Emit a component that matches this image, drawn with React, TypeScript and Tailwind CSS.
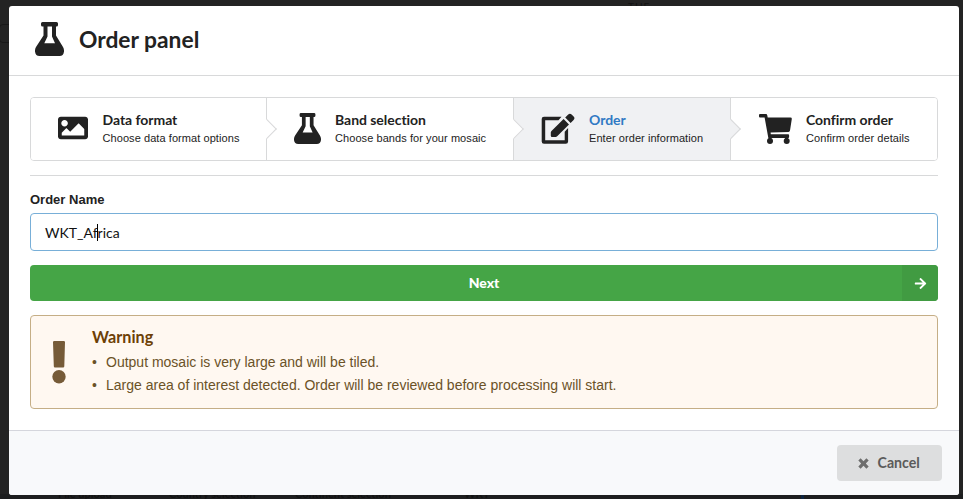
import type { ReactNode } from "react";
import { FaImage, FaArrowRight } from "react-icons/fa";

const sans = "font-['Liberation_Sans',Arial,sans-serif]";
const lato = "font-[Lato,sans-serif]";

function Flask({ className }: { className: string }) {
  return (
    <svg className={className} viewBox="0 0 29 34" preserveAspectRatio="none" fill="#222" fillRule="evenodd">
      <path d="M7.500 0h14q1.500 0 1.500 1.500v1.500q0 1.500-1.500 1.500H21V13.500l7 11.500q1.200 2.200 1 4.500-.5 4.500-4.500 4.500h-20Q.500 34 0 29.500-.200 27.200 1 25L8.500 13.500V4.500H7.500Q6 4.500 6 3V1.500Q6 0 7.500 0zM12.500 4.500V14.500L9.300 21.300H20L17 14.500V4.500z" />
    </svg>
  );
}

function Edit({ className }: { className: string }) {
  return (
    <svg className={className} viewBox="0 0 34 31" fill="#222">
      <path d="M20.500 3.800H3Q.700 3.800.700 6v22.500q0 2.200 2.300 2.200h21.800q2.300 0 2.300-2.200V15l-3.400 3.800v8.500H4.200V7.200h13.300z" />
      <path d="M22.600 6.100 28 11.500 16.200 23.300q-.7.700-1.600.7H11q-1.200 0-1.200-1.200v-3.300q0-.9.700-1.600z" />
      <path d="M24.200 4.500 27.200 1.500q1.700-1.700 3.400 0l2 2q1.700 1.700 0 3.400L29.600 9.900z" />
    </svg>
  );
}

function Cart({ className }: { className: string }) {
  return (
    <svg className={className} viewBox="0 0 33 30" fill="#222">
      <path d="M1 0h6q1 0 1.200 1l.5 2.500h22.800q1.500 0 1.300 1.500l-1.800 11.500q-.2 1.300-1.500 1.400l-17.900.6.200 1.800h17.300q1 0 1 1v1.700q0 1-1 1H10.500q-1.200 0-1.400-1.200L5.600 3.500H1q-1 0-1-1V1q0-1 1-1z" />
      <path d="M9.500 22.500h3v3h-3zM26 22.500h3v3h-3z" />
      <circle cx="11" cy="27" r="3" />
      <circle cx="27.700" cy="27" r="3" />
    </svg>
  );
}

type StepProps = {
  box: string;
  icon: ReactNode;
  title: string;
  titleClass?: string;
  text: string;
  active?: boolean;
  last?: boolean;
};

function Step({ box, icon, title, titleClass = "text-[#222]", text, active, last }: StepProps) {
  return (
    <div className={`relative flex items-center ${box} ${active ? "bg-[#f0f1f3]" : "bg-white"} ${last ? "" : "border-r border-[#d8d9da]"}`}>
      {icon}
      <div className="flex flex-col whitespace-nowrap">
        <span className={`${lato} text-[14px] leading-[18px] font-bold tracking-[-0.04px] ${titleClass}`}>{title}</span>
        <span className={`${sans} text-[11px] leading-[18px] tracking-[0.07px] text-[#222]`}>{text}</span>
      </div>
      {!last && (
        <span className={`absolute top-[24px] -right-[8px] z-10 size-[14px] rotate-45 border-t border-r border-[#d8d9da] ${active ? "bg-[#f0f1f3]" : "bg-white"}`} />
      )}
    </div>
  );
}

function Backdrop() {
  return (
    <div className={`absolute inset-0 overflow-hidden bg-[#232323] text-[#121212] ${lato}`}>
      <span className="absolute top-0 left-[628px] text-[10px] leading-[12px] tracking-[1px]">THE</span>
      <span className="absolute top-[24px] -left-px h-[19px] w-[20px] rounded border border-[#181818]" />
      <span className="absolute bottom-0 left-0 h-[5px] w-full bg-[#1d1e1f]" />
      <span className="absolute top-[488px] left-[58px] text-[11px] leading-[11px] font-bold">File upload</span>
      <span className="absolute top-[488px] left-[169px] text-[11px] leading-[11px] font-bold">Country selection</span>
      <span className="absolute top-[488px] left-[295px] text-[11px] leading-[11px] font-bold">Continent selection</span>
      <span className="absolute top-[488px] left-[464px] text-[11px] leading-[11px] font-bold">WKT</span>
      <span className="absolute top-[495px] left-[801px] h-1 w-[3px] bg-[#0e2440]" />
    </div>
  );
}

export default function App() {
  return (
    <div className="relative h-[499px] w-[963px] overflow-hidden">
      <Backdrop />
      <main className="relative mt-[6px] ml-[9px] flex h-[489px] w-[950px] flex-col overflow-hidden rounded-[3px] bg-white">
        <header className="flex h-[70px] shrink-0 items-center border-b border-[#d8d9da] pb-[2px] pl-[26px]">
          <Flask className="mt-[-2px] h-[34px] w-[29px]" />
          <h1 className={`${lato} mt-[-2px] ml-[15px] text-[22.8px] leading-[30px] font-bold text-[#222]`}>Order panel</h1>
        </header>

        <section className="flex flex-1 flex-col px-[21px] pt-[21px]">
          <div className="flex h-[64px] shrink-0 overflow-hidden rounded-[4px] border border-[#d8d9da]">
            <Step
              box="w-[236px] pl-[27px]"
              icon={<FaImage className="mt-[-2px] mr-[14.5px] h-[30px] w-[30px] text-[#222]" />}
              title="Data format"
              text="Choose data format options"
            />
            <Step
              box="w-[247px] pl-[27px]"
              icon={<Flask className="mt-[-2px] mr-[14px] h-[31px] w-[27px]" />}
              title="Band selection"
              text="Choose bands for your mosaic"
            />
            <Step
              box="w-[217px] pl-[27px]"
              icon={<Edit className="mt-[-2px] mr-[14px] h-[31px] w-[34px]" />}
              title="Order"
              titleClass="text-[#3079c4]"
              text="Enter order information"
              active
            />
            <Step
              box="flex-1 pl-[28px]"
              icon={<Cart className="mr-[14px] h-[30px] w-[33px]" />}
              title="Confirm order"
              text="Confirm order details"
              last
            />
          </div>

          <hr className="mt-[14px] border-[#d8d9da]" />

          <label className={`${sans} mt-[15px] text-[13px] leading-[18px] font-bold text-[#222]`}>Order Name</label>
          <div className="mt-[4px] flex h-[38px] shrink-0 items-center rounded-[4px] border border-[#78afd8] pt-[2px] pl-[14px]">
            <span className={`${lato} relative text-[14px] leading-[18px] text-[#111]`}>
              WKT_Africa
              <i className="absolute top-0 left-[52px] h-[17px] w-px bg-black" />
            </span>
          </div>

          <button className="mt-[14px] flex h-[36px] shrink-0 overflow-hidden rounded-[4px] bg-[#45a546] text-white">
            <span className={`${lato} flex-1 pl-[36px] text-center text-[14px] leading-[36px] font-black`}>Next</span>
            <span className="flex h-full w-[36px] items-center justify-center bg-[#419b42]">
              <FaArrowRight className="size-[13px]" />
            </span>
          </button>

          <div className="mt-[14px] flex h-[94px] shrink-0 rounded-[4px] border border-[#c5ae86] bg-[#fff8f1] pl-[21px]">
            <svg className="mt-[25px] h-[43px] w-[14px]" viewBox="0 0 14 43" fill="#765b38">
              <path d="M2.200 0h9.600q1.200 0 1.200 1.200l-.7 24q0 1.300-1.200 1.300H3q-1.200 0-1.200-1.300L1 1.200Q1 0 2.200 0z" />
              <circle cx="7" cy="35.700" r="6.700" />
            </svg>
            <div className="ml-[26px] pt-[11px]">
              <h2 className={`${lato} text-[16.2px] leading-[20px] font-bold text-[#6d4006]`}>Warning</h2>
              <ul className={`${sans} mt-[4px] text-[14px] leading-[23px] text-[#6b5227]`}>
                <li className="flex"><span className="w-[14px]">•</span>Output mosaic is very large and will be tiled.</li>
                <li className="flex"><span className="w-[14px]">•</span>Large area of interest detected. Order will be reviewed before processing will start.</li>
              </ul>
            </div>
          </div>
        </section>

        <footer className="flex h-[65px] shrink-0 justify-end border-t border-[#d5d6dd] bg-[#f8f9fb] pt-[14px] pr-[17px]">
          <button className={`${lato} flex h-[36px] w-[105px] items-center rounded-[4px] bg-[#dddedf] pl-[21px] text-[14.2px] font-bold text-[#5b5b5b]`}>
            <svg className="mr-[8.5px] size-[11px]" viewBox="0 0 11 11" fill="#6e6e6e">
              <path d="M2.600.3 5.500 3.200 8.400.3 10.700 2.600 7.800 5.500 10.700 8.400 8.400 10.700 5.500 7.800 2.600 10.700.3 8.400 3.200 5.500.3 2.600z" />
            </svg>
            <span className="leading-[18px]">Cancel</span>
          </button>
        </footer>
      </main>
    </div>
  );
}
